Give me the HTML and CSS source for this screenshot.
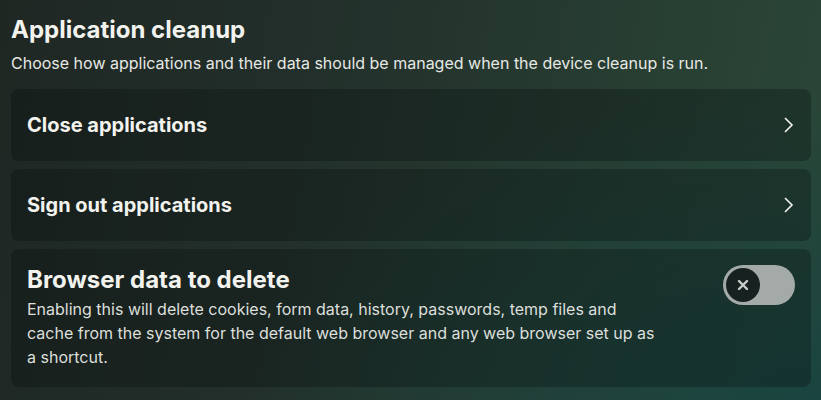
FILE: index.html
```html
<!DOCTYPE html>
<html lang="en">

<head>
  <meta charset="UTF-8">
  <meta name="viewport" content="width=device-width, initial-scale=1.0">
  <title>Application cleanup</title>
  <link rel="stylesheet" href="styles.css">
</head>

<body>
  <div class="page">
    <h1 class="title">Application cleanup</h1>
    <p class="subtitle">Choose how applications and their data should be managed when the device cleanup is run.</p>

    <div class="card card-link">
      <span class="card-label">Close applications</span>
      <svg class="chevron" width="12" height="18" viewBox="0 0 12 18">
        <path d="M3 2 L10 9 L3 16" fill="none" stroke="#f2f2ee" stroke-width="1.6" />
      </svg>
    </div>

    <div class="card card-link">
      <span class="card-label">Sign out applications</span>
      <svg class="chevron" width="12" height="18" viewBox="0 0 12 18">
        <path d="M3 2 L10 9 L3 16" fill="none" stroke="#f2f2ee" stroke-width="1.6" />
      </svg>
    </div>

    <div class="card card-setting">
      <div class="setting-text">
        <h2 class="setting-title">Browser data to delete</h2>
        <p class="setting-desc">Enabling this will delete cookies, form data, history, passwords, temp files and cache from the system for the default web browser and any web browser set up as a shortcut.</p>
      </div>
      <div class="toggle">
        <div class="knob">
          <svg width="14" height="14" viewBox="0 0 14 14">
            <path d="M3 3 L11 11 M11 3 L3 11" stroke="#c9cecc" stroke-width="2.4" stroke-linecap="round" />
          </svg>
        </div>
      </div>
    </div>
  </div>
</body>

</html>
```

FILE: styles.css
```css
body {
  margin: 0;
  padding: 0;
  width: 821px;
  height: 400px;
  overflow: hidden;
  font-family: Inter, "Noto Sans", sans-serif;
  color: #f2f2ee;
  background-color: #1f2925;
  background-image:
    radial-gradient(ellipse 70% 80% at 100% 100%, rgba(26, 68, 64, 1), rgba(26, 68, 64, 0) 100%),
    linear-gradient(100deg, #1f2723 0%, #222f2a 35%, #2b4838 100%);
}

.page {
  padding: 14px 10px 0 11px;
  display: flex;
  flex-direction: column;
}

.title {
  margin: 0;
  font-size: 24px;
  font-weight: 700;
  line-height: 32px;
}

.subtitle {
  margin: 5px 0 14px 0;
  font-size: 16px;
  line-height: 24px;
  color: #e6e8e4;
}

.card {
  background-color: rgba(6, 12, 12, 0.3);
  border-radius: 8px;
  margin-bottom: 8px;
}

.card-link {
  height: 72px;
  display: flex;
  align-items: center;
  justify-content: space-between;
  padding: 0 16px;
}

.card-label {
  font-size: 20px;
  font-weight: 700;
}

.chevron {
  margin-right: 1px;
}

.card-setting {
  display: flex;
  justify-content: space-between;
  align-items: flex-start;
  padding: 16px 16px 18px 16px;
}

.setting-text {
  width: 632px;
}

.setting-title {
  margin: 0;
  font-size: 24px;
  font-weight: 700;
  line-height: 30px;
}

.setting-desc {
  margin: 2px 0 0 0;
  font-size: 16px;
  line-height: 24px;
  color: #dcdfdb;
}

.toggle {
  width: 72px;
  height: 40px;
  border-radius: 20px;
  background-color: #a3aaa8;
  display: flex;
  align-items: center;
  padding-left: 3px;
  box-sizing: border-box;
}

.knob {
  width: 34px;
  height: 34px;
  border-radius: 50%;
  background-color: #172220;
  display: flex;
  align-items: center;
  justify-content: center;
}
```
